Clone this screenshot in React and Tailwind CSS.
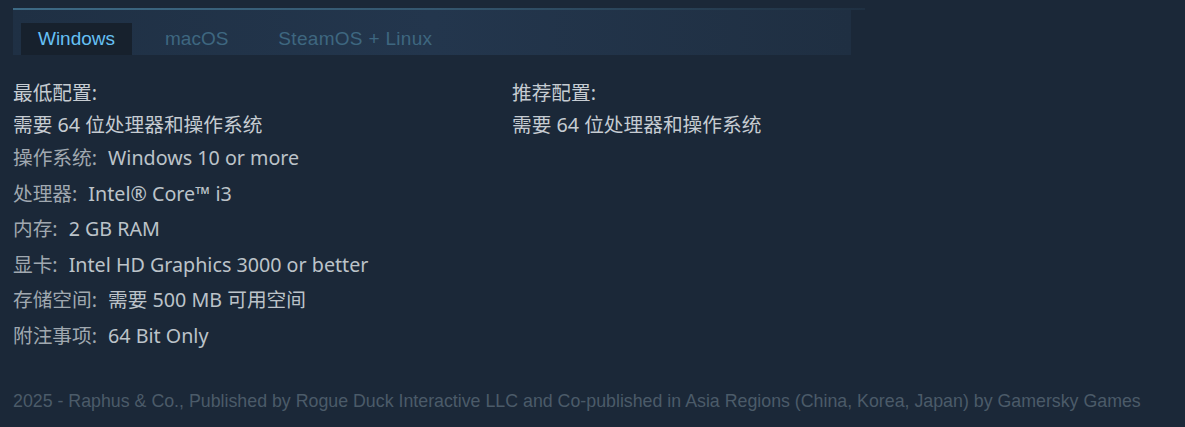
import React from 'react';

const minSpecs = [
  ['操作系统:', 'Windows 10 or more'],
  ['处理器:', 'Intel® Core™ i3'],
  ['内存:', '2 GB RAM'],
  ['显卡:', 'Intel HD Graphics 3000 or better'],
  ['存储空间:', '需要 500 MB 可用空间'],
  ['附注事项:', '64 Bit Only'],
];

const App = () => {
  return (
    <div
      className="w-[1185px] h-[427px] bg-[#1b2838] overflow-hidden"
      style={{ fontFamily: '"Noto Sans", "Noto Sans CJK SC", sans-serif' }}
    >
      {/* tabs */}
      <div className="pt-[8px] pl-[13px]">
        <div className="w-[852px] h-[2px] bg-gradient-to-r from-[#3d6a85] via-[#34566e] to-[#1f3042]" />
        <div
          className="w-[838px] h-[45px] bg-gradient-to-r from-[#1f3044] via-[#23364d] to-[#1f2f42] pl-[8px] pt-[13px] flex items-stretch text-[19px]"
          style={{ fontFamily: '"Liberation Sans", Arial, sans-serif' }}
        >
          <div className="w-[111px] bg-[#17212d] text-[#66c0f4] flex items-center justify-center pt-[1px]">Windows</div>
          <div className="ml-[33px] text-[#3e6780] flex items-center pt-[1px]">macOS</div>
          <div className="ml-[50px] text-[#3e6780] flex items-center pt-[1px] tracking-[0.3px]">SteamOS + Linux</div>
        </div>
      </div>

      {/* requirements */}
      <div className="flex pl-[13px] pt-[22px] text-[19.7px] leading-[32px]">
        <div className="w-[499px]">
          <div className="text-[#c6ccd2]">最低配置:</div>
          <div className="text-[#c6ccd2]">需要 64 位处理器和操作系统</div>
          <ul className="mt-[1px]">
            {minSpecs.map(([k, v]) => (
              <li key={k} className="h-[35.5px] leading-[32px]">
                <span className="text-[#a0a8b0]">{k}</span>
                <span className="text-[#bcc3c9] ml-[11px]">{v}</span>
              </li>
            ))}
          </ul>
        </div>
        <div>
          <div className="text-[#c6ccd2]">推荐配置:</div>
          <div className="text-[#c6ccd2]">需要 64 位处理器和操作系统</div>
        </div>
      </div>

      {/* legal */}
      <div
        className="pl-[13px] mt-[33px] text-[17.8px] text-[#4b5b69]"
        style={{ fontFamily: '"Liberation Sans", Arial, sans-serif' }}
      >
        2025 - Raphus &amp; Co., Published by Rogue Duck Interactive LLC and Co-published in Asia Regions (China, Korea, Japan) by Gamersky Games
      </div>
    </div>
  );
};

export default App;
